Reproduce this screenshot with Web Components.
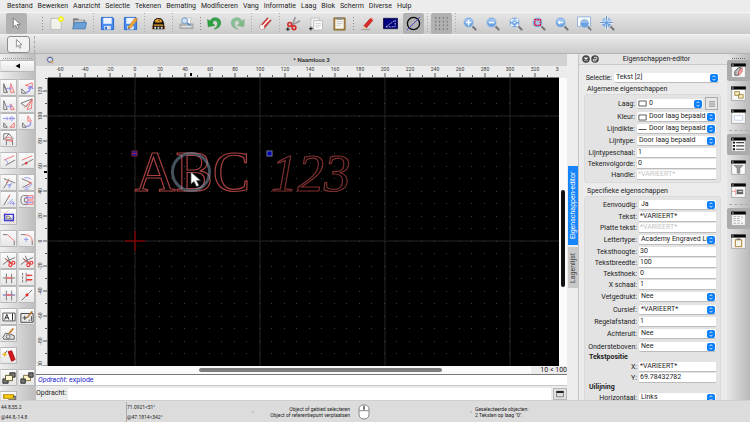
<!DOCTYPE html>
<html lang="nl">
<head>
<meta charset="utf-8">
<title>Naamloos 3</title>
<style>
html,body{margin:0;height:100%}
body{font:7px/10px Roboto,"Liberation Sans",sans-serif;color:#1c1c1c;background:#ebebeb;overflow:hidden}
</style>
</head>
<body>
<cad-app></cad-app>
<script>
const lens = inner => `<path d="M10.5 10.5l4 4" stroke="#777" stroke-width="2.2" stroke-linecap="round"/><circle cx="7" cy="7" r="5.4" fill="#6ba1e2" stroke="#c3cfda" stroke-width="1.2"/><path d="M2.5 6a4.7 4.7 0 0 1 9 0z" fill="#9ac3f3"/>${inner}`;
const win = inner => `<rect x=".7" y=".7" width="14.6" height="14.6" fill="#fafafa" stroke="#aaa"/><path d="M.2.5h15.6v3.3H.2z" fill="#050505"/><path d="M1.2 1.5h1.6v1.2H1.2z" fill="#ddd"/>${inner}`;
const K = 'stroke="#6c6c6c" fill="none"', R = 'stroke="#f26a6a" fill="none"', B = 'stroke="#8f8ff0" fill="none"';
const scissor = `<path d="M1 12L7 7.5 15 4M6 2l3 7M3 5l9 6" stroke="#666" fill="none"/><circle cx="9.5" cy="12.6" r="1.8" stroke="#e33" fill="none" stroke-width="1.3"/><circle cx="13" cy="10" r="1.7" stroke="#e33" fill="none" stroke-width="1.3"/><path d="M5 6l3 4 3-1" stroke="#e33" fill="none"/>`;
const ICONS = {
pointer:`<path d="M4.5 2v10l2.5-2.2 1.8 3.8 1.7-.8-1.8-3.7 3.3-.2z" fill="#fff" stroke="#777"/>`,
newdoc:`<path d="M2 2.5h11v12H2z" fill="#f2f2ec" stroke="#bbb"/><circle cx="12.8" cy="3.3" r="3" fill="#f0ee25"/><circle cx="12.8" cy="3.3" r="1.2" fill="#ffffa8"/>`,
folder:`<path d="M1.5 13V3h5l1 1.5h6V13z" fill="#75797c" stroke="#888"/><path d="M2.7 4.5h9.6V8H2.7z" fill="#c4c8c9"/><path d="M.7 13.7L3 7h12.5L14 13.7z" fill="#6ba1d8" stroke="#4c82ba"/>`,
save:`<path d="M1.5 1.5h12l1 1v12h-13z" fill="#478bee" stroke="#2765ca"/><path d="M3.5 2h9v6.3h-9z" fill="#edf4ff"/><path d="M4.5 10.5h7v4h-7z" fill="#dfe4eb"/><path d="M5.5 11.5h2v2.7h-2z" fill="#2768cb"/>`,
bee:`<path d="M2 14V8q1-6 6-6t6 6v6z" fill="#171310"/><path d="M4 5l3-2 2 1-4 3zM9 3l3 2-1 2-2-2zM3 9h10v1.3H3zM5 7l3-2 3 2z" fill="#f0a52c"/><path d="M3.5 11.5h2v2h-2zm3.4 0h2v2h-2zm3.5 0h2v2h-2z" fill="#ddd"/><path d="M1 10h1v4H1zM14 10h1v4h-1z" fill="#a65c20"/>`,
print:`<path d="M3 9l2-7h8l-1 7z" fill="#f7f9fa" stroke="#c1c7c9"/><path d="M1 8.5h14v5H1z" fill="#b6b8b9" stroke="#a2a6a9"/><path d="M3 11.3h10" stroke="#eee"/><circle cx="6" cy="5" r="3.1" fill="#cce1f8" stroke="#6d91bc"/><path d="M8.5 7.3L12 10" stroke="#588ac0" stroke-width="1.5"/>`,
undo:`<path d="M2.500 6.500Q4.500 1.700 9 1.800q5.500.5 5.600 5.500Q14.500 13 7.500 14q4-2.200 3.900-6-.3-3.300-3-3.300-2 .2-2.800 3.300z" fill="#37a34d" stroke="#21883a" stroke-width=".6"/><path d="M.6 3.500l.6 8 7.300-1.500z" fill="#2aa23d" stroke="#24883a" stroke-width=".5"/>`,
eraser:`<path d="M1.500 11L10 1.500l4.500 3L6.500 14H3z" fill="#cf2a28" stroke="#a9a9a9" stroke-width=".8"/><path d="M4 12l8.500-9.200" stroke="#fff" stroke-width="1.600"/><path d="M1.800 11L4 9l3 2.500L5.800 14H3z" fill="#f3f3f3"/>`,
cut:`<path d="M10 1L7 9M15 5L6 10" stroke="#999" stroke-width="1.8"/><circle cx="4" cy="9" r="2" fill="none" stroke="#d52828" stroke-width="1.7"/><circle cx="8.5" cy="12.5" r="2" fill="none" stroke="#d52828" stroke-width="1.7"/><path d="M0 14h4M2 12v4" stroke="#111"/>`,
copy:`<path d="M2 2h9v10H2z" fill="#eee" stroke="#c0c0c0"/><path d="M5 5h9.5v8.5L12.5 15H5z" fill="#fafafa" stroke="#bbb"/><path d="M7 8h5.5M7 10h5.5M7 12h4" stroke="#bbb" stroke-width=".7"/><path d="M0 13.5h4M2 11.5v4" stroke="#111"/>`,
paste:`<path d="M2 2h12v13H2z" fill="#ac8544" stroke="#8b6c37"/><path d="M3.5 3.5h9v10h-9z" fill="#f5f5f0"/><path d="M5 1.5h6V4H5z" fill="#888c88"/><path d="M5 6h6M5 8h6M5 10h4" stroke="#ccc"/>`,
pen:`<path d="M4 10.5l7-8 2.8 2-7 8.2z" fill="#da2c29" stroke="#a71512" stroke-width=".6"/><path d="M4 10.5L3 14l3.8-1.3z" fill="#e9c59b"/><path d="M11 2.5l1.2-1.2 2.5 2-.9 1.2z" fill="#eba3a0"/><path d="M1 14.5h10" stroke="#888" stroke-width=".7"/>`,
ortho:`<path d="M.5 2.5h15v11H.5z" fill="#00007e" stroke="#16164a"/><path d="M3 11.5l10-7v7z" fill="none" stroke="#eee" stroke-width=".8" stroke-dasharray="2 1"/>`,
circle:`<circle cx="8" cy="8" r="6.5" fill="none" stroke="#080808" stroke-width="1.4"/><path d="M1 15L15 1" stroke="#4646d8"/>`,
gridpts:`<path d="M2 1v14M6 1v14M10 1v14M14 1v14" stroke="#666" stroke-width=".9" stroke-dasharray="2 2"/>`,
zin:lens('<path d="M4 7h6M7 4v6" stroke="#fff" stroke-width="1.7"/>'),
zout:lens('<path d="M4 7h6" stroke="#fff" stroke-width="1.7"/>'),
zauto:lens('<path d="M4 6V4h2M8 4h2v2M10 8v2H8M6 10H4V8M6 7h2" stroke="#fff" fill="none" stroke-width="1.2"/>'),
zsel:lens('<path d="M4 4h6v6H4z" stroke="#dc183e" fill="#a8c4e8" stroke-width="1.5" stroke-dasharray="2 .6"/>'),
zprev:lens('<path d="M3.5 7l3.2-2.5v1.7H10v1.6H6.7v1.7z" fill="#fff"/>'),
zwin:`<path d="M.5 1h14v10H.5z" fill="#fff" stroke="#8aaeda"/><g transform="translate(2 2) scale(.87)">${lens('')}</g>`,
zpan:lens('<path d="M7 0v5M7 9v5M0 7h5M9 7h5" stroke="#fff" stroke-width="2.4"/><path d="M7 0v5M7 9v5M0 7h5M9 7h5" stroke="#3f77b8" stroke-width=".9"/>'),
globe:`<path d="M2 2h12v12H2z" fill="#eee" stroke="#aaa"/><circle cx="8" cy="7.5" r="5" fill="#d6def0" stroke="#4a5789" stroke-width="2"/><path d="M9 10l5 4" stroke="#e3a036" stroke-width="2.4"/>`,
move:`<path d="M2 3v10h4zM2 5l4 8" ${K}/><path d="M10 3l4 10h-4z" ${R}/><path d="M4 8.5h6M8 6.5l2 2-2 2" ${B}/>`,
rotate:`<path d="M2 14V9l5 5z" ${K}/><path d="M6 5l8-3v5z" ${R}/><path d="M7 13q5-1 5-6M9.5 9l2.3-3L15 9" ${B} stroke-width="1.6"/>`,
scale:`<path d="M2 3v10h4z" ${K}/><path d="M10 7l4 6h-4z" ${R}/><path d="M5 9.5h6M9 7.5l2 2-2 2" ${B}/>`,
mirror:`<path d="M1 6L14 1 7 10z" ${K}/><path d="M14 2L8 13l5-1zM14 2L5 11" ${R}/>`,
flip:`<path d="M2 9v5h4z" ${K}/><path d="M14 9v5H9z" ${R}/><path d="M1 4h6M5 2l2 2-2 2" ${B}/><circle cx="11" cy="4" r="2" ${B}/><path d="M8 4h7" ${B}/>`,
moverot:`<path d="M3 14V9l4 5z" ${K}/><path d="M9 7V1l4 6z" ${R}/><path d="M7 13q6 0 5-5" ${B} stroke-width="1.6"/>`,
project:`<path d="M2 9V2h6L2 9M8 2l5 6M5 15V9h7v6" ${K}/><path d="M4 9q1-4 4-3 3 0 4 5z" ${R}/>`,
offset:`<path d="M2 7l12-5" ${R}/><path d="M4 13l11-6" ${K}/><path d="M4 6l3 5" ${B}/>`,
offsetpt:`<path d="M2 7l12-5" ${R}/><path d="M2 13l13-7" ${K}/><circle cx="7" cy="10.5" r="1.4" fill="#d33"/>`,
trim:`<path d="M2 3l13 5M2 14l5-8" ${K}/><path d="M5 8l3-5" ${R}/><path d="M7 12l4-3M8 14l3-6M6 10h4" ${B}/>`,
trim2:`<path d="M2 3l11 5L3 13" ${K}/><path d="M13 8l-4-2M13 8l-4 2" ${R}/><path d="M5 2h5l3 2M6 13l5-1 3-3M5 15h5" ${B}/>`,
lengthen:`<path d="M2 14L9 2" ${K}/><path d="M9 2l-2 4" ${R}/><path d="M6 13l6-6M9 13l3-4M13 10v4M11 12h4" ${B}/>`,
stretch:`<path d="M8 3H4Q1 3 1 8t3 5h4M8 6H5v4h3" ${K}/><path d="M8 3h7v4H8zM8 9h7v4H8z" ${R}/><path d="M6 5h9M6 11h9M9 3v10" ${B}/>`,
bbox:`<path d="M1 2l13 13M1 7l6-6M8 15l7-7" stroke="#f7b5b5"/><path d="M3 5h10v7H3z" stroke="#3a3ad1" fill="none" stroke-width="1.6"/><path d="M5 10h6L8 7H5z" ${K}/>`,
bevel:`<path d="M1 3h5M14 10v5" ${K}/><path d="M6 3l8 7" ${R}/>`,
round:`<path d="M1 3h5M14 10v5" ${K}/><path d="M5 3q9 0 9 8" ${R}/><path d="M7 6v5M4.5 8.5h5" ${B}/>`,
scissor, scissor2:scissor,
divide:`<path d="M1 8h4M11 8h4M5 3v11M11 3v11" ${K}/><path d="M5 8h6" ${R} stroke-width="2"/>`,
breakseg:`<path d="M3 2v12M7 2v12" ${K} stroke-dasharray="3 1"/><path d="M7 5h7M7 10h7M10 4v2M10 9v2" stroke="#df3b3b" stroke-width="1.5"/>`,
breakgap:`<path d="M1 8h14M5 3v11M11 3v11" ${K}/><path d="M1 8h14" ${B}/><path d="M5 8h6" ${R} stroke-width="1.7"/>`,
breakpt:`<path d="M2 14L14 2" ${K}/><circle cx="8" cy="8" r="1.7" fill="#e22"/>`,
edittext:`<path d="M1 3.5h14v9H1z" fill="#fff" stroke="#444"/><path d="M12 4v8M3 11l2.5-6L8 11M4 9h3" stroke="#111" fill="none"/>`,
editdim:`<path d="M1 4h14v10H1z" fill="#eee" stroke="#333"/><path d="M3 9h5M5.500 6.500v5M10.500 11v1.500M13 7v5.500" stroke="#333" fill="none"/><path d="M7 9l6-8 2 1-6 7z" fill="#b57a35"/>`,
edithatch:`<path d="M1 12l3-5 5 1 5 2v4H2z" fill="#dfe2df" stroke="#555"/><circle cx="7" cy="11" r="2.2" ${K}/><path d="M7 7l5-6 2 1-5 6z" fill="#c98336"/>`,
explode:`<path d="M7 3l4-1 4 10-4 2z" fill="#d4191c" stroke="#a70d14"/><path d="M6 2L3 5" stroke="#555"/><path d="M3 3l1 2 2 1-2 1-1 2-1-2-2-1 2-1z" fill="#ebbb22"/>`,
front:`<path d="M1 9h6v5H1zM9 2h6v5H9z" fill="#777" stroke="#222"/><path d="M4 5h8v6H4z" fill="#fff7d3" stroke="#554a24"/>`,
back:`<path d="M4 5h8v6H4z" fill="#fff2c5" stroke="#776833"/><path d="M1 9h5v5H1zM10 2h5v5h-5z" fill="#777" stroke="#222"/>`,
roller:`<path d="M2 2h11v4H2z" fill="#ffd013" stroke="#b28600" stroke-width="1.3"/><path d="M13 4h2v4H8v4" stroke="#555" fill="none" stroke-width="1.6"/>`,
wLayer:win('<path d="M4 13V9l4-4h3l-3 5v3z" fill="#bbb" stroke="#555"/><path d="M8 12V9l4-4v4l-3 4z" fill="#f7a3a3" stroke="#cf6666" stroke-width=".7"/>'),
wBlock:win('<path d="M4 6h5v4H4zM8 9h5v4H8z" fill="#f6e9bd" stroke="#a48f4b"/>'),
wView:win('<path d="M3.5 7h9v5h-9z" fill="#fcfdff" stroke="#c3cfe5"/>'),
wList:win('<path d="M2 6h2.3M2 9.5h2.3M2 13h2.3" stroke="#111" stroke-width="2"/><path d="M5.5 6H14M5.5 9.5H14M5.5 13H14" stroke="#444" stroke-width="1.2"/>'),
wFilter:win('<path d="M3 5.5h10L9.5 9v5h-3V9z" fill="#999" stroke="#666" stroke-width=".5"/>'),
wLib:win('<path d="M1 9h4M5 6v7" stroke="#f39a9a"/><path d="M6 7h7v5H6z" fill="#666"/><path d="M8 9h4" stroke="#ddd"/>'),
wCmd:win('<path d="M2.5 5.7H11M2.5 8H9M12 6v2M2.5 10.3H11M2.5 13H13" stroke="#aaa" stroke-dasharray="3 1"/>'),
wClip:win('<path d="M4 5.5h8V14H4z" fill="#bd9452"/><path d="M5.3 6.8h5.4v6H5.3z" fill="#f7f6ee"/><path d="M6 4.7h4v1.7H6z" fill="#777"/>'),
cmdwin:`<path d="M1 2.5h14v11H1z" fill="#ddd" stroke="#333"/><path d="M1 2h14v4H1z" fill="#222"/>`,
mouse:`<path d="M8 .8q5 0 5 5v4q0 5.2-5 5.2t-5-5.2v-4Q3 .8 8 .8z" fill="#fff" stroke="#888"/><path d="M3 6.700h10M8 1v5.500" stroke="#888"/><path d="M7.3 2.5h1.4v3H7.3z" fill="#555"/>`,
close:`<circle cx="8" cy="8" r="7.5" fill="#454545"/><path d="M5 5l6 6M11 5l-6 6" stroke="#fff" stroke-width="2.2"/>`,
float:`<circle cx="8" cy="8" r="7.5" fill="#454545"/><path d="M4.5 8.5h5v3.5h-5zM6.5 6V4.5h5v4H10" stroke="#fff" stroke-width="1.5" fill="none"/>`,
left:`<path d="M12 3v10L3 8z" fill="#000"/>`,
swatch:`<path d="M1.5 3.5h13v9h-13z" fill="#fff" stroke="#333" stroke-width="1.4"/>`,
line:`<path d="M1 8h14" stroke="#333" stroke-width="1.5"/>`,
updown:`<rect width="16" height="16" rx="4" fill="#0a7dfa"/><path d="M5 6.3l3-3 3 3M5 9.7l3 3 3-3" fill="none" stroke="#fff" stroke-width="1.7"/>`,
lines:`<path d="M3 4.5h10M3 8h10M3 11.5h10" stroke="#777" stroke-width="1.3"/>`
};
ICONS.saveas = ICONS.save + `<path d="M6 11l7-9 2.5 1.6-7 8.8-3 1z" fill="#f4a835" stroke="#b27127" stroke-width=".6"/>`;
ICONS.redo = `<g transform="matrix(-1 0 0 1 16 0)" opacity=".5">${ICONS.undo}</g>`;

class Base extends HTMLElement{
  connectedCallback(){
    if(this.shadowRoot) return;
    const t=document.createElement('template');
    t.innerHTML=`<style>*{box-sizing:border-box}button,input,select{font:inherit;color:inherit;margin:0;padding:0;border:0;border-radius:0;min-width:0;outline:0}button{display:grid;place-items:center;background:none}</style>`+this.view();
    this.attachShadow({mode:'open'}).append(t.content.cloneNode(true));
  }
  at(n,d=''){return this.getAttribute(n)??d}
}
const define=(name,view)=>customElements.define(name,class extends Base{view(){return view(this)}});

define('cad-icon',e=>`<style>:host{display:block;width:var(--icon,16px);height:var(--icon,16px);flex:none}svg{display:block;width:100%;height:100%}</style><svg viewBox="0 0 16 16" aria-hidden="true">${ICONS[e.at('name')]}</svg>`);

define('menu-bar',()=>`<style>:host{display:flex;gap:5px;height:12px;padding:0 7px;background:#ececec;align-items:center}button{line-height:10px;white-space:nowrap}</style>
${['Bestand','Bewerken','Aanzicht','Selectie','Tekenen','Bemating','Modificeren','Vang','Informatie','Laag','Blok','Scherm','Diverse','Hulp'].map(t=>`<button>${t}</button>`).join('')}`);

const topTools='*pointer : newdoc folder | save saveas | bee | print : undo redo | eraser | cut copy paste : pen ortho *circle | *gridpts | zin zout zauto zsel zprev zwin zpan'.split(' ');
define('tool-bar',()=>`<style>:host{display:flex;gap:2px;height:22px;padding-left:6px;align-items:stretch;background:linear-gradient(#e6e6e6,#cacaca);border-top:1px solid #f6f6f6}
button{width:21px;--icon:15px}.on{background:#b2b2b2;border-radius:2px}i{width:3px;background:repeating-linear-gradient(#aaa 0 1px,transparent 1px 3px) center/1px 100% no-repeat}.h{background-image:repeating-linear-gradient(#888 0 1px,transparent 1px 3px);margin-block:4px}button:first-of-type+i{margin-left:12px}</style>
${topTools.map(t=>t=='|'?'<i></i>':t==':'?'<i class="h"></i>':`<button class="${t[0]=='*'?'on':''}" aria-label="${t.replace('*','')}"><cad-icon name="${t.replace('*','')}"></cad-icon></button>`).join('')}`);

define('option-bar',()=>`<style>:host{display:flex;align-items:center;gap:4px;height:20px;padding-left:7px;background:linear-gradient(#ebebeb,#cbcbcb);border-top:1px solid #f2f2f2;border-bottom:1px solid #b4b4b4}
button{width:23px;height:17px;border:1px solid #8e8e8e;border-radius:3px;background:#f2f2f2;--icon:12px}i{height:17px;border-left:1px dashed #aaa}</style><button aria-label="Selecteren"><cad-icon name="pointer"></cad-icon></button><i></i>`);

const groups=['move rotate scale mirror flip moverot project','offset offsetpt','trim trim2 lengthen stretch bbox','bevel round','scissor scissor2 divide breakseg breakgap breakpt','edittext editdim edithatch','explode','front back','roller'];
define('tool-palette',()=>`<style>:host{display:flex;flex-direction:column;gap:5px;overflow:hidden;padding:4px 1px 0 0;background:linear-gradient(90deg,#eee,#bcbcbc);--icon:14px}
.h{height:1px;margin:0 3px -4px;border-top:1px dotted #999}.g{display:grid;grid-template-columns:1fr 1fr;grid-auto-rows:17px;flex:none;column-gap:1px}
button{background:linear-gradient(#fbfbfb,#e6e6e6);border:1px solid #b9b9b9;border-left-color:#ddd}.b{height:12px;flex:none;margin-bottom:2px;--icon:8px}</style><div class="h"></div><button class="b" aria-label="Terug"><cad-icon name="left"></cad-icon></button>
${groups.map(g=>`<div class="g">${g.split(' ').map(n=>`<button aria-label="${n}"><cad-icon name="${n}"></cad-icon></button>`).join('')}</div>`).join('')}`);

/* Drawing units: 1.25 px per unit, world origin at (OX, OY) inside the canvas. */
const U=1.25, OX=87, OY=163;
define('ruler-scale',e=>{
  const v=e.hasAttribute('vertical'); let s='';
  for(let u=v?-100:-60;u<=(v?130:340);u+=10){
    const p=v?OY-u*U:OX+u*U, big=u%20==0, l=big?5:3;
    s+=v?`<path d="M${12-l} ${p}H12"/>`:`<path d="M${p} ${12-l}V12"/>`;
    if(big) s+=v?`<text transform="translate(6 ${p}) rotate(-90)">${u}</text>`:`<text x="${p}" y="5">${u}</text>`;
  }
  s+=v?`<path d="M8 94h3" style="stroke:#000;stroke-width:2"/>`:`<path d="M143 7v3" style="stroke:#000;stroke-width:2"/>`;
  return `<style>:host{display:block;background:#ececec;overflow:hidden;min-width:0;min-height:0;${v?'border-right':'border-bottom'}:1px solid #777}svg{display:block;width:100%;height:100%}path{stroke:#555}text{font:5px Roboto,sans-serif;fill:#333;text-anchor:middle}</style><svg>${s}</svg>`;
});

define('drawing-canvas',()=>{
  let s='';
  for(let u=-60;u<=330;u+=10)for(let w=-90;w<=120;w+=10)s+=`<rect x="${Math.floor(OX+u*U)-1}" y="${Math.floor(OY-w*U)}" width="1" height="1"/>`;
  let g='';
  for(const u of[0,100,200,300])g+=`M${OX+u*U} 0V2000`;
  for(const w of[0,100])g+=`M0 ${OY-w*U}H3000`;
  return `<style>:host{display:block;background:#000;overflow:hidden;min-width:0;min-height:0}svg{display:block;width:100%;height:100%}text{font:56px "Liberation Serif",serif;fill:none;stroke:#a84040;stroke-width:1.2}text+text{font-size:53px;font-style:italic;stroke:#7d2f2f}</style>
<svg><path d="${g}" stroke="#121212" stroke-width="2"/><g fill="#3c3c3c">${s}</g><path d="M77 163h20M87 153v20" stroke="#780000" stroke-width="1.5"/>
<text x="87" y="113">ABC</text><text x="223" y="113">123</text>
<circle cx="143" cy="94" r="18.500" fill="none" stroke="#8aa4b8" stroke-opacity=".5" stroke-width="3"/>
<rect x="84" y="73" width="5" height="5" fill="#1a1aa8" stroke="#77203f"/><path d="M84 75.500h5" stroke="#b01c3c"/><rect x="219" y="73" width="5" height="5" fill="#0000b4" stroke="#6e7b9a"/>
<path d="M143 94v12l3-2.500 2.500 5 2.500-1-2.500-5h4z" fill="#fff" stroke="#555" stroke-width=".7"/></svg>`;
});

define('drawing-window',()=>`<style>:host{display:grid;grid-template:12px 12px minmax(0,1fr) 8px/12px minmax(0,1fr) 8px;min-width:0;min-height:0;background:#ececec}
header{grid-column:1/-1;display:grid;grid-template-columns:32px 1fr 12px;align-items:center;background:#d2d2d2;padding:0 10px;font-size:6px;text-align:center;--icon:8px;font-weight:500}
ruler-scale{grid-column:2}ruler-scale[vertical]{grid-column:1}.v{background:#fbfbfb;padding:112px 2px 0}.v i{display:block;height:97px;border-radius:2px;background:#111}
.f{grid-column:1/-1;display:grid;grid-template-columns:minmax(0,1fr) 36px;background:#fafafa}.f span{background:#ececec;line-height:8px;text-align:right}.f i{display:block;margin:2px 0 0 33%;width:49%;height:4px;border-radius:2px;background:#7d7d7d}</style>
<header><cad-icon name="globe"></cad-icon><span>* Naamloos 3</span></header><ruler-scale></ruler-scale><ruler-scale vertical></ruler-scale><drawing-canvas></drawing-canvas><div class="v"><i></i></div><div class="f"><div><i></i></div><span>10 &lt; 100</span></div>`);

define('command-line',()=>`<style>:host{display:block;border-top:1px solid #777;background:#ececec}p{margin:0 0 2px;height:11px;line-height:10px;padding-left:2px;background:#fff;color:#1a1acb;border-bottom:1px solid #c8c8c8}
div{display:grid;grid-template-columns:auto 1fr 14px;height:12px;gap:2px}label{line-height:11px}input{background:#fff}button{--icon:8px;background:#e2e2e2;border:1px solid #b5b5b5}</style>
<p><em>Opdracht:</em> explode</p><div><label for="c">Opdracht:</label><input id="c"><button aria-label="Venster"><cad-icon name="cmdwin"></cad-icon></button></div>`);

define('dock-tabs',()=>`<style>:host{display:flex;flex-direction:column;gap:2px;padding:112px 0 0 1px;background:#ededed}button{writing-mode:vertical-rl;transform:rotate(180deg);width:10px;height:79px;line-height:10px;color:#fff;background:#1685fb;white-space:nowrap}button+button{height:41px;color:#444;background:#c9c9c9}</style><button>Eigenschappen-editor</button><button>Lagenlijst</button>`);

define('property-row',e=>{
  const k=e.at('kind','input'),ic=e.at('icon'),v=e.at('value');
  const f=k=='input'?`<input id="f" value="${v}">`:k=='ghost'?`<input id="f" value="" placeholder="${v}" disabled>`:`<select id="f"><option>${v}</option></select><cad-icon class="a" name="updown"></cad-icon>`;
  return `<style>:host{display:grid;grid-template-columns:var(--label,54px) minmax(0,1fr) auto;column-gap:2px;align-items:center;height:11px}:host([kind=select]){height:var(--sel,13px)}
label{text-align:right;white-space:nowrap;justify-self:end}.f{display:grid;grid-template:1fr/auto minmax(0,1fr) auto;align-items:center;min-width:0}
input,select{grid-area:1/1/2/4;width:100%;height:10px;background:#fff;line-height:9px;padding-left:1px;border-bottom:1px solid #bbb}select{appearance:none;border-radius:2px;padding-left:${ic?12:2}px;padding-right:9px;overflow:hidden}input::placeholder{color:#c4c4c4;opacity:1}
cad-icon{pointer-events:none;z-index:1}.a{--icon:8px;grid-area:1/3;margin-right:1px}.i{--icon:9px;grid-area:1/1;margin-left:1px}</style>
<label for="f">${e.at('label')}:</label><div class="f">${f}${ic?`<cad-icon class="i" name="${ic}"></cad-icon>`:''}</div><slot></slot>`;
});
const row=(label,value,kind='input',icon='',inner='',cls='')=>`<property-row class="${cls}" label="${label}" value="${value}" kind="${kind}" icon="${icon}">${inner}</property-row>`;
define('property-panel',()=>`<style>:host{display:flex;flex-direction:column;min-height:0;overflow:hidden;background:#ebebeb;border-left:1px solid #c5c5c5}
header{display:flex;gap:1px;align-items:center;height:11px;flex:none;padding:0 14px 0 3px;border-bottom:1px solid #c9c9c9;--icon:8px;background:#e4e4e4}header span{flex:1;text-align:center}header button{width:8px}
main{padding:6px 6px 0 5px;overflow:hidden;flex:1;min-height:0}.sel{--label:28px}h2{font:inherit;margin:0 0 0 3px;height:10px}
section{background:#e3e3e3;border:1px solid #dadada;border-radius:3px;padding:1px 2px 2px 0;margin-bottom:3px}.one{--label:50px;--sel:12px}.two{--label:52px}h3{font:bold 7px/8px Roboto,sans-serif;margin:0 0 0 4px;height:8px}
.laag{--sel:15px}.laag button{width:13px;height:13px;border:1px solid #aaa;background:#e7e7e7;--icon:10px}</style>
<header><button aria-label="Sluiten"><cad-icon name="close"></cad-icon></button><button aria-label="Losmaken"><cad-icon name="float"></cad-icon></button><span>Eigenschappen-editor</span></header>
<main>${row('Selectie','Tekst [2]','select','','','sel')}<h2>Algemene eigenschappen</h2><section class="one">
${row('Laag','0','select','swatch','<button aria-label="Lagen"><cad-icon name="lines"></cad-icon></button>','laag')}${row('Kleur','Door laag bepaald','select','swatch')}${row('Lijndikte','Door laag bepaald','select','line')}${row('Lijntype','Door laag bepaald','select')}${row('Lijntypeschaal','1')}${row('Tekenvolgorde','0')}${row('Handle','*VARIEERT*','ghost')}</section>
<h2>Specifieke eigenschappen</h2><section class="two">
${row('Eenvoudig','Ja','select')}${row('Tekst','*VARIEERT*')}${row('Platte tekst','*VARIEERT*','ghost')}${row('Lettertype','Academy Engraved LET','select')}${row('Teksthoogte','30')}${row('Tekstbreedte','100')}${row('Teksthoek','0')}${row('X schaal','1')}${row('Vetgedrukt','Nee','select')}${row('Cursief','*VARIEERT*','select')}${row('Regelafstand','1')}${row('Achteruit','Nee','select')}${row('Ondersteboven','Nee','select')}<h3>Tekstpositie</h3>${row('X','*VARIEERT*')}${row('Y','69.78432782')}<h3>Uilijning</h3>${row('Horizontaal','Links','select')}</section></main>`);

define('dock-strip',()=>`<style>:host{display:flex;flex-direction:column;gap:2px;padding-top:4px;background:linear-gradient(90deg,#e6e6e6,#b9b9b9);--icon:15px}
i{border-top:1px dashed #aaa;margin:1px 2px}.h{border-top:1px dotted #666;margin:0 5px -1px}button{height:21px}.on{background:#ababab;border-radius:2px}</style><i class="h"></i>
${'*wLayer wBlock wView | *wList wFilter wLib | *wCmd wClip'.split(' ').map(t=>t=='|'?'<i></i>':`<button class="${t[0]=='*'?'on':''}" aria-label="${t.replace('*','')}"><cad-icon name="${t.replace('*','')}"></cad-icon></button>`).join('')}`);

define('status-bar',()=>`<style>:host{display:grid;grid-template-columns:125fr 128fr 96fr 28fr 94fr 278fr;height:22px;background:#dcdcdc;border-top:1px solid #cfcfcf;font-size:5px;line-height:6px;align-items:center;padding-left:1px}
div{white-space:pre;line-height:6px}.w{line-height:10px}.w+.w{border-left:1px solid #aaa}.r{text-align:right}.d{justify-self:end;width:2px;height:2px;border-radius:1px;background:#bbb}.m{display:grid;place-items:center;--icon:16px}.two{display:grid;grid-template-columns:1fr 2px;align-items:center}.t{padding-left:3px}</style>
<div class="w">44.8,55.2\n@44.8,-14.8</div><div class="w two"><span>71.0921&lt;51°\n@47.1814&lt;342°</span><i class="d"></i></div><div class="r">Object of gebied selecteren\nObject of referentiepunt verplaatsen</div><div class="m"><cad-icon name="mouse"></cad-icon></div><i class="d"></i><div class="t">Geselecteerde objecten:\n2 Teksten op laag "0".</div>`);

define('cad-app',()=>`<style>:host{display:grid;grid-template-rows:auto auto auto minmax(0,1fr) auto;height:100vh}
main{display:grid;grid-template-columns:36px minmax(0,1fr) 11px 149px 23px;min-height:0}.c{display:grid;grid-template-rows:minmax(0,1fr) auto;min-width:0;min-height:0}main>*{min-height:0}</style>
<menu-bar></menu-bar><tool-bar></tool-bar><option-bar></option-bar><main><tool-palette></tool-palette><div class="c"><drawing-window></drawing-window><command-line></command-line></div><dock-tabs></dock-tabs><property-panel></property-panel><dock-strip></dock-strip></main><status-bar></status-bar>`);
</script>
</body>
</html>
